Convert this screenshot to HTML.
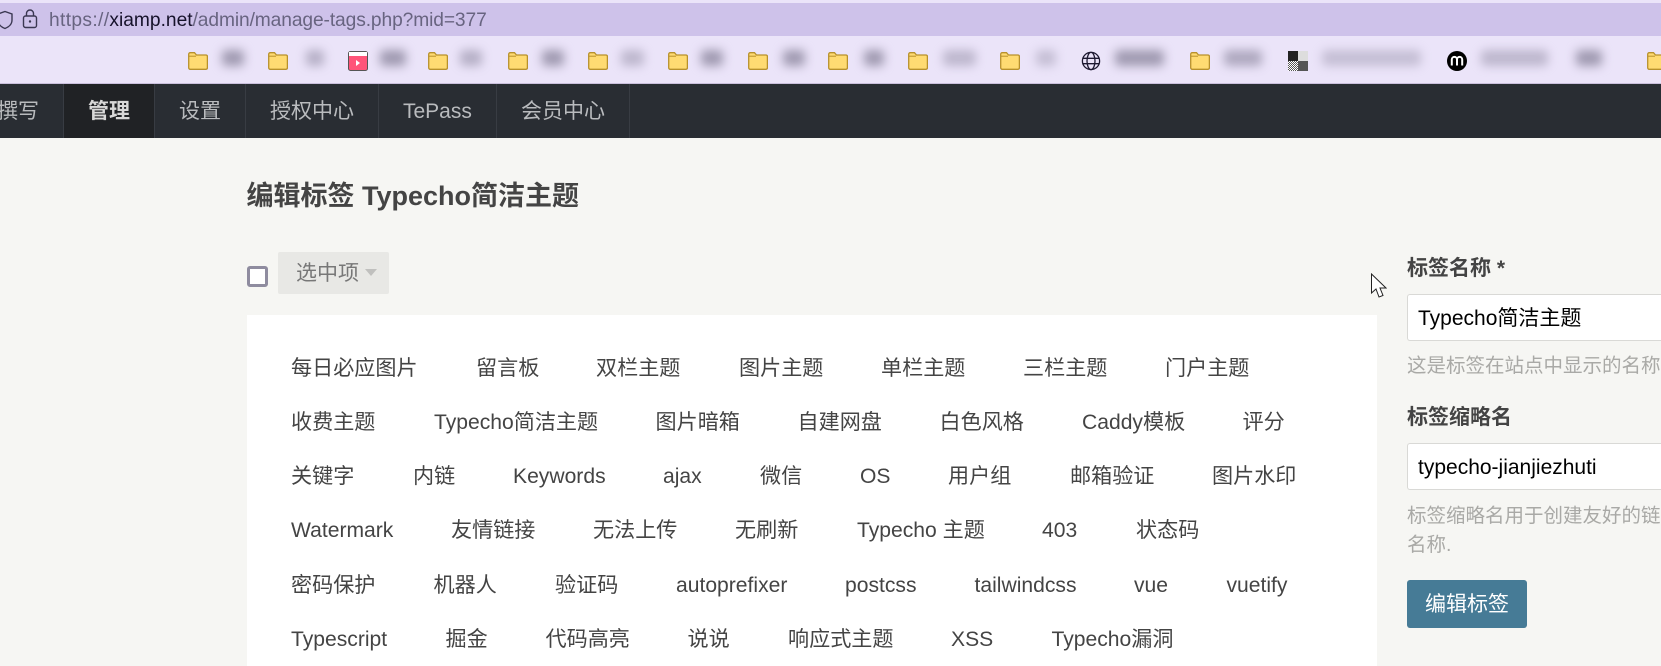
<!DOCTYPE html>
<html lang="zh"><head><meta charset="utf-8"><style>
html,body{margin:0;padding:0;width:1661px;height:666px;overflow:hidden;background:#f6f6f3;font-family:"Liberation Sans","Noto Sans CJK SC",sans-serif;position:relative}
div,span,svg{position:absolute;white-space:nowrap;display:block}
.bl{height:16px;top:50px;background:#9f99b0;filter:blur(5px);border-radius:4px}
.nv{top:84px;height:54px;line-height:56px;font-size:21px;color:#b9bbbe}
.dv{top:84px;width:1px;height:54px;background:#383c43}
.r span{top:0;line-height:30px;font-size:21.1px;color:#444}
.r{left:0;width:1661px;height:30px;overflow:hidden}
.lb{left:1407px;font-size:21px;font-weight:700;color:#444;line-height:30px}
.in{left:1407px;width:253px;height:45px;background:#fff;border:1px solid #d9d9d6;border-right:0;border-radius:3px 0 0 3px}
.iv{left:1418px;font-size:21px;line-height:30px;color:#000}
.ds{left:1407px;width:254px;overflow:hidden;font-size:19.5px;line-height:29px;color:#a9a9a6}
</style></head><body>
<div style="left:0;top:0;width:1661px;height:3px;background:#ebe4f9"></div>
<div style="left:0;top:3px;width:1661px;height:33px;background:#cec2ea"></div>
<div style="left:0;top:36px;width:1661px;height:47px;background:#ebe4f9"></div>
<div style="left:0;top:83px;width:1661px;height:1px;background:#c9bfdc"></div>
<svg style="left:0;top:10px" width="14" height="20" viewBox="4 0 14 20"><path d="M9 1.500 L16 4 V10 C16 14 13 17 9 18.500 C5 17 2 14 2 10 V4 Z" fill="none" stroke="#3b3852" stroke-width="1.400"/></svg>
<svg style="left:21px;top:9px" width="18" height="20" viewBox="0 0 18 20"><rect x="2.500" y="7" width="13" height="11.500" rx="2" fill="none" stroke="#3b3852" stroke-width="1.400"/><path d="M5.500 7V4.500a3.500 3.500 0 0 1 7 0V7" fill="none" stroke="#3b3852" stroke-width="1.400"/><circle cx="9" cy="12.500" r="1.200" fill="#3b3852"/></svg>
<div style="left:49px;top:9px;line-height:24px;font-size:19.2px;color:#686480"><span style="position:static;display:inline;letter-spacing:.35px">https://</span><span style="position:static;display:inline;color:#16122a">xiamp.net</span><span style="position:static;display:inline;letter-spacing:-.1px">/admin/manage-tags.php?mid=377</span></div>
<svg width="0" height="0"><defs><g id="f"><path d="M.7 5V2.200A1.500 1.500 0 0 1 2.200.7H6.500L8.500 3H18A1.500 1.500 0 0 1 19.400 4.500V15.800A1.500 1.500 0 0 1 18 17.300H2.200A1.500 1.500 0 0 1 .7 15.800Z" fill="#ffdb72" stroke="#b8912c" stroke-width="1.300"/><path d="M1 4.200H8" stroke="#b8912c" stroke-width="1"/></g>
<pattern id="d" width="2" height="2" patternUnits="userSpaceOnUse"><rect width="2" height="2" fill="#fff"/><rect width="1" height="1" fill="#555"/><rect x="1" y="1" width="1" height="1" fill="#555"/></pattern></defs></svg>
<svg style="left:188px;top:52px" width="20" height="18"><use href="#f"/></svg>
<svg style="left:268px;top:52px" width="20" height="18"><use href="#f"/></svg>
<svg style="left:428px;top:52px" width="20" height="18"><use href="#f"/></svg>
<svg style="left:508px;top:52px" width="20" height="18"><use href="#f"/></svg>
<svg style="left:588px;top:52px" width="20" height="18"><use href="#f"/></svg>
<svg style="left:668px;top:52px" width="20" height="18"><use href="#f"/></svg>
<svg style="left:748px;top:52px" width="20" height="18"><use href="#f"/></svg>
<svg style="left:828px;top:52px" width="20" height="18"><use href="#f"/></svg>
<svg style="left:908px;top:52px" width="20" height="18"><use href="#f"/></svg>
<svg style="left:1000px;top:52px" width="20" height="18"><use href="#f"/></svg>
<svg style="left:1190px;top:52px" width="20" height="18"><use href="#f"/></svg>
<svg style="left:1647px;top:52px" width="14" height="18"><use href="#f"/></svg>
<svg style="left:348px;top:51px" width="20" height="20" viewBox="0 0 20 20"><rect x=".5" y=".5" width="19" height="19" rx="2" fill="#ff5479" stroke="#555"/><rect x="1" y="1" width="18" height="4" fill="#fff"/><path d="M8 9l4 3-4 3z" fill="#fff"/></svg>
<svg style="left:1081px;top:51px" width="20" height="20" viewBox="0 0 20 20" fill="none" stroke="#1c1830" stroke-width="1.300"><circle cx="10" cy="10" r="8.600"/><ellipse cx="10" cy="10" rx="4" ry="8.600"/><path d="M1.500 7.300H18.500M1.500 12.700H18.500"/></svg>
<svg style="left:1288px;top:51px" width="20" height="20" viewBox="0 0 20 20"><rect width="20" height="20" fill="url(#d)"/><rect width="10" height="10" fill="#222"/><rect x="10" width="10" height="10" fill="#ddd"/><rect x="10" y="10" width="10" height="10" fill="#555"/></svg>
<svg style="left:1447px;top:51px" width="20" height="20" viewBox="0 0 20 20"><circle cx="10" cy="10" r="10" fill="#000"/><path d="M4.800 14.500V8.500a2.500 2.500 0 0 1 5.200 0V14.500M10 8.500a2.500 2.500 0 0 1 5.200 0V14.500" fill="none" stroke="#fff" stroke-width="2"/></svg>
<div class="bl" style="left:222px;width:22px"></div>
<div class="bl" style="left:306px;width:18px;opacity:.7"></div>
<div class="bl" style="left:380px;width:26px"></div>
<div class="bl" style="left:460px;width:22px;opacity:.7"></div>
<div class="bl" style="left:542px;width:22px"></div>
<div class="bl" style="left:621px;width:23px;opacity:.6"></div>
<div class="bl" style="left:701px;width:22px"></div>
<div class="bl" style="left:783px;width:22px"></div>
<div class="bl" style="left:864px;width:20px"></div>
<div class="bl" style="left:943px;width:33px;opacity:.6"></div>
<div class="bl" style="left:1036px;width:20px;opacity:.5"></div>
<div class="bl" style="left:1115px;width:49px"></div>
<div class="bl" style="left:1224px;width:38px;opacity:.8"></div>
<div class="bl" style="left:1322px;width:99px;opacity:.5"></div>
<div class="bl" style="left:1481px;width:67px;opacity:.6"></div>
<div class="bl" style="left:1576px;width:26px"></div>

<div style="left:0;top:84px;width:1661px;height:54px;background:#292d33"></div>
<div style="left:64px;top:84px;width:91px;height:54px;background:#202225"></div>
<div class="dv" style="left:63px"></div><div class="dv" style="left:154px"></div><div class="dv" style="left:245px"></div><div class="dv" style="left:378px"></div><div class="dv" style="left:496px"></div><div class="dv" style="left:629px"></div>
<div style="left:0;top:84px;width:60px;height:54px;overflow:hidden"><div class="nv" style="left:-3px;top:0">撰写</div></div>
<div class="nv" style="left:88px;font-weight:700;color:#d8d8d8">管理</div>
<div class="nv" style="left:179px">设置</div>
<div class="nv" style="left:270px">授权中心</div>
<div class="nv" style="left:403px">TePass</div>
<div class="nv" style="left:521px">会员中心</div>

<div style="left:246.500px;top:176.500px;font-size:27px;font-weight:700;color:#444;line-height:38px">编辑标签 Typecho简洁主题</div>
<div style="left:247px;top:266px;width:15px;height:15px;background:#fff;border:3px solid #8f8c9f;border-radius:3px"></div>
<div style="left:278px;top:252px;width:111px;height:42px;background:#e8e8e5;border-radius:2px"></div>
<div style="left:296px;top:259px;font-size:21px;line-height:30px;color:#777">选中项</div>
<div style="left:365px;top:269px;width:0;height:0;border-left:6px solid transparent;border-right:6px solid transparent;border-top:7px solid #c0c0be"></div>

<div style="left:247px;top:315px;width:1130px;height:351px;background:#fff"></div>
<div class="r" style="top:354px"><span style="left:291px">每日必应图片</span><span style="left:476px">留言板</span><span style="left:596px">双栏主题</span><span style="left:739px">图片主题</span><span style="left:881px">单栏主题</span><span style="left:1023px">三栏主题</span><span style="left:1165px">门户主题</span></div>
<div class="r" style="top:408px"><span style="left:291px">收费主题</span><span style="left:434px">Typecho简洁主题</span><span style="left:655.500px">图片暗箱</span><span style="left:797.500px">自建网盘</span><span style="left:939.500px">白色风格</span><span style="left:1082px">Caddy模板</span><span style="left:1242.500px">评分</span></div>
<div class="r" style="top:462px"><span style="left:291px">关键字</span><span style="left:413px">内链</span><span style="left:513px">Keywords</span><span style="left:663px">ajax</span><span style="left:760px">微信</span><span style="left:860px">OS</span><span style="left:948px">用户组</span><span style="left:1070px">邮箱验证</span><span style="left:1212px">图片水印</span></div>
<div class="r" style="top:516px"><span style="left:291px">Watermark</span><span style="left:451px">友情链接</span><span style="left:593px">无法上传</span><span style="left:735px">无刷新</span><span style="left:857px">Typecho 主题</span><span style="left:1042px">403</span><span style="left:1136px">状态码</span></div>
<div class="r" style="top:571px"><span style="left:291px">密码保护</span><span style="left:433.500px">机器人</span><span style="left:555px">验证码</span><span style="left:676px">autoprefixer</span><span style="left:845px">postcss</span><span style="left:974.500px">tailwindcss</span><span style="left:1134px">vue</span><span style="left:1226.500px">vuetify</span></div>
<div class="r" style="top:625px"><span style="left:291px">Typescript</span><span style="left:445.500px">掘金</span><span style="left:545.500px">代码高亮</span><span style="left:687.500px">说说</span><span style="left:788px">响应式主题</span><span style="left:951px">XSS</span><span style="left:1051.500px">Typecho漏洞</span></div>

<svg style="left:1370px;top:273px" width="17" height="26" viewBox="0 0 17 26"><path d="M1.500 1V20L6 16L9 24L13 22.500L10 15H16Z" fill="#fff" stroke="#222" stroke-width="1"/></svg>

<div class="lb" style="top:254px">标签名称 *</div>
<div class="in" style="top:294px"></div>
<div class="iv" style="top:304px">Typecho简洁主题</div>
<div class="ds" style="top:352px">这是标签在站点中显示的名称</div>
<div class="lb" style="top:403px">标签缩略名</div>
<div class="in" style="top:443px"></div>
<div class="iv" style="top:453px">typecho-jianjiezhuti</div>
<div class="ds" style="top:502px">标签缩略名用于创建友好的链接形式<br>名称.</div>
<div style="left:1407px;top:580px;width:120px;height:48px;background:#467b96;border-radius:3px;color:#fff;font-size:21px;line-height:50px;text-align:center">编辑标签</div>
</body></html>
